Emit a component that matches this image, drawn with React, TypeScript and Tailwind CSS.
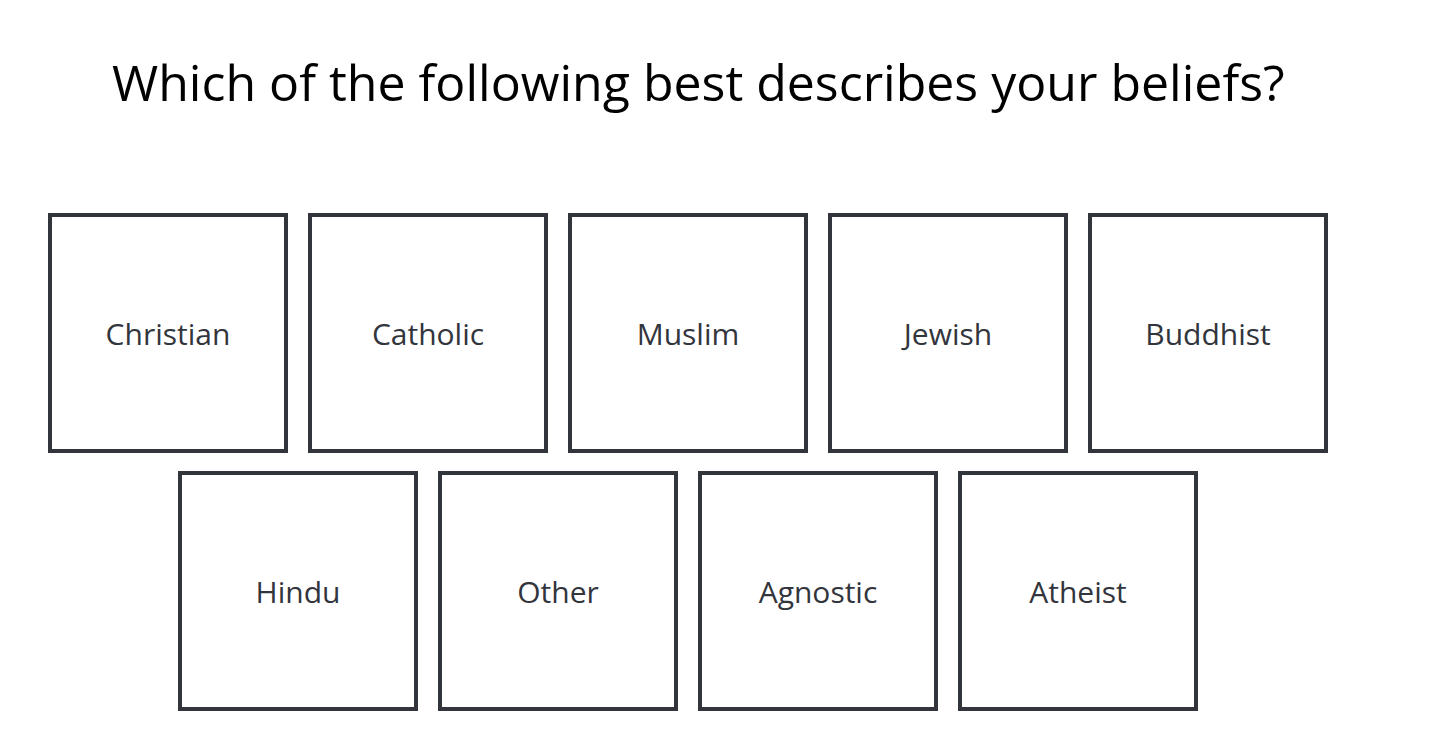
const options = [
  "Christian",
  "Catholic",
  "Muslim",
  "Jewish",
  "Buddhist",
  "Hindu",
  "Other",
  "Agnostic",
  "Atheist",
];

export default function App() {
  return (
    <div
      className="min-h-screen bg-white"
      style={{ fontFamily: '"Open Sans", "Liberation Sans", sans-serif' }}
    >
      <h1 className="pl-[112px] pt-[50px] text-[50px] leading-[64px] text-black">
        Which of the following best describes your beliefs?
      </h1>

      <div className="ml-[48px] mt-[99px] flex w-[1280px] flex-wrap justify-center gap-x-5 gap-y-[18px]">
        {options.map((opt) => (
          <button
            key={opt}
            className="flex h-[240px] w-[240px] items-center justify-center border-4 border-[#33353d] bg-white text-[30px] text-[#33353d]"
          >
            {opt}
          </button>
        ))}
      </div>
    </div>
  );
}
